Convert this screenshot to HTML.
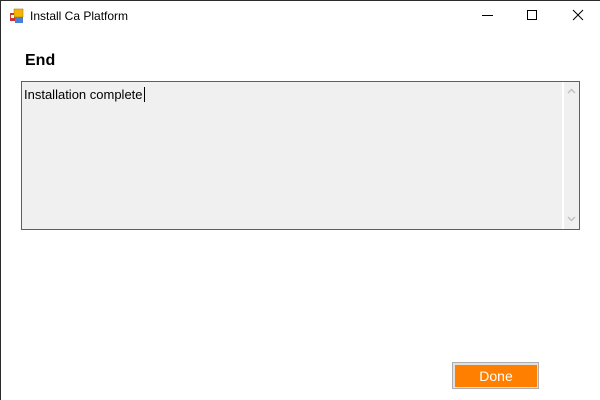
<!DOCTYPE html>
<html><head><style>
body{margin:0;width:600px;height:400px;background:#fff;position:relative;overflow:hidden;font-family:"Liberation Sans",sans-serif}
.bt{position:absolute;left:0;top:0;width:600px;height:1px;background:#2b2b2b}
.bl{position:absolute;left:0;top:0;width:1px;height:400px;background:#2b2b2b}
.title{position:absolute;left:30px;top:9px;font-size:12px;color:#000}
.tb{position:absolute;left:21px;top:81px;width:557px;height:147px;border:1px solid #0078d7;background:#f0f0f0}
.sb{position:absolute;right:0;top:0;width:15px;height:147px;background:#f0f0f0;border-left:2px solid #fff}
</style></head><body>
<div class="bt"></div><div class="bl"></div>
<svg style="position:absolute;left:9px;top:8px" width="16" height="16"><rect x="1" y="5" width="5" height="8" fill="#c33"/><rect x="5" y="1" width="9" height="8" fill="#f5b400" stroke="#a07000" stroke-width="0.5"/><rect x="6" y="9" width="8" height="6" fill="#4a7fd4"/><rect x="2" y="7" width="3" height="3" fill="#fff"/></svg>
<div class="title">Install Ca Platform</div>
<div style="position:absolute;left:482px;top:15px;width:11px;height:1px;background:#000"></div>
<div style="position:absolute;left:527px;top:10px;width:8px;height:8px;border:1px solid #000"></div>
<svg style="position:absolute;left:572px;top:9px" width="12" height="12"><path d="M1 1L11 11M11 1L1 11" stroke="#000" stroke-width="1"/></svg>
<div style="position:absolute;left:25px;top:52px;font-size:16px;font-weight:bold">End</div>
<div class="tb">
<div style="position:absolute;left:2px;top:5px;font-size:13px">Installation complete<span style="border-left:1px solid #000;margin-left:1px"></span></div>
<div class="sb">
<svg style="position:absolute;left:3px;top:6px" width="9" height="6"><path d="M1 5L4.5 1.5L8 5" stroke="#c0c0c0" stroke-width="1.5" fill="none"/></svg>
<svg style="position:absolute;left:3px;top:134px" width="9" height="6"><path d="M1 1L4.5 4.5L8 1" stroke="#c0c0c0" stroke-width="1.5" fill="none"/></svg>
</div></div>
<div style="position:absolute;left:452px;top:362px;width:85px;height:25px;border:1px solid #adadad;background:#e1e1e1"></div>
<div style="position:absolute;left:455px;top:365px;width:82px;height:22px;background:#ff7f00;color:#fff;font-size:14px;text-align:center;line-height:22px">Done</div>
</body></html>
